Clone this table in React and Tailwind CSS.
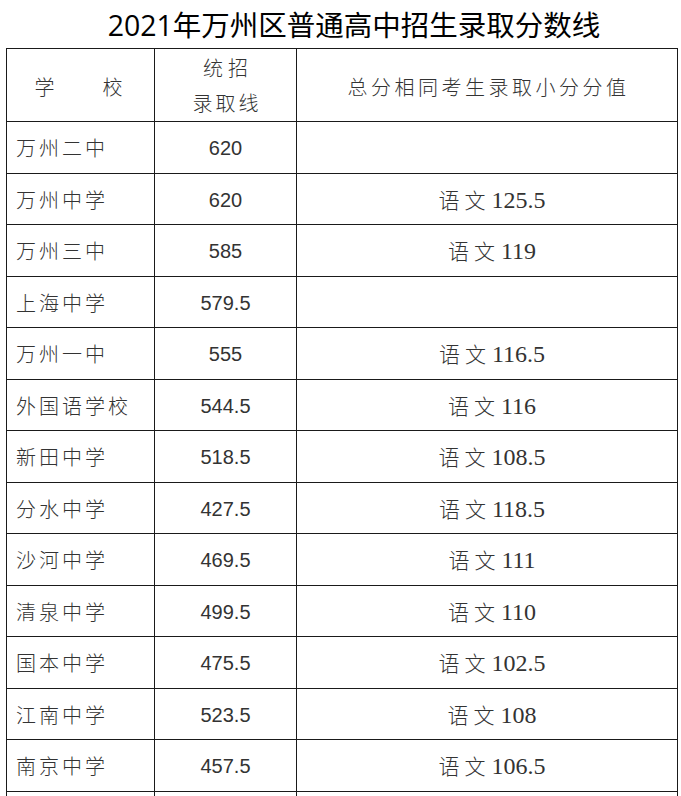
import React from "react";

const rows = [
  ["万州二中", "620", ""],
  ["万州中学", "620", "125.5"],
  ["万州三中", "585", "119"],
  ["上海中学", "579.5", ""],
  ["万州一中", "555", "116.5"],
  ["外国语学校", "544.5", "116"],
  ["新田中学", "518.5", "108.5"],
  ["分水中学", "427.5", "118.5"],
  ["沙河中学", "469.5", "111"],
  ["清泉中学", "499.5", "110"],
  ["国本中学", "475.5", "102.5"],
  ["江南中学", "523.5", "108"],
  ["南京中学", "457.5", "106.5"],
  ["", "", ""],
];

const cjk = { fontFamily: '"Noto Sans CJK SC", "Noto Sans", sans-serif' };

export default function App() {
  return (
    <div className="w-[681px] h-[796px] overflow-hidden bg-white text-[#333333] font-light" style={cjk}>
      <div className="h-[48px] flex items-center justify-center pl-[27px] pt-[1px] text-[28.5px] leading-none text-black font-normal">
        <span>
          <span style={{ fontFamily: '"Open Sans", "Noto Sans", sans-serif' }}>2021</span>年万州区普通高中招生录取分数线
        </span>
      </div>
      <div className="ml-[6px] w-[672px] border-l border-t border-[#1a1a1a]">
        <div className="grid grid-cols-[148px_142px_381px] h-[73px] text-[20px]">
          <div className="border-r border-b border-[#1a1a1a] flex items-center justify-center gap-[48px] pt-[3px] pr-[4px]">
            <span>学</span>
            <span>校</span>
          </div>
          <div className="border-r border-b border-[#1a1a1a] flex flex-col items-center justify-center leading-[35px] tracking-[3px] pl-[3px]">
            <span className="tracking-[5px] pl-[2px]">统招</span>
            <span>录取线</span>
          </div>
          <div className="border-r border-b border-[#1a1a1a] flex items-center justify-center tracking-[3.5px] pl-[3px] pt-[3px]">
            总分相同考生录取小分分值
          </div>
        </div>
        {rows.map((r, i) => (
          <div key={i} className="grid grid-cols-[148px_142px_381px] h-[51.5px]">
            <div className="border-r border-b border-[#1a1a1a] flex items-center pl-[9px] pt-[2px] text-[20px] tracking-[3px]">
              {r[0]}
            </div>
            <div
              className="border-r border-b border-[#1a1a1a] flex items-center justify-center pt-[2px] text-[20px] font-normal"
              style={{ fontFamily: '"Liberation Sans", Arial, sans-serif' }}
            >
              {r[1]}
            </div>
            <div className="border-r border-b border-[#1a1a1a] flex items-center justify-center pl-[10px] pt-[2px]">
              {r[2] && (
                <span className="flex items-baseline">
                  <span className="text-[21px] mr-[5px]">语</span>
                  <span className="text-[21px]">文</span>
                  <span
                    className="text-[24px] ml-[6px] font-normal"
                    style={{ fontFamily: '"Liberation Serif", "Times New Roman", serif' }}
                  >
                    {" "}
                    {r[2]}
                  </span>
                </span>
              )}
            </div>
          </div>
        ))}
      </div>
    </div>
  );
}
